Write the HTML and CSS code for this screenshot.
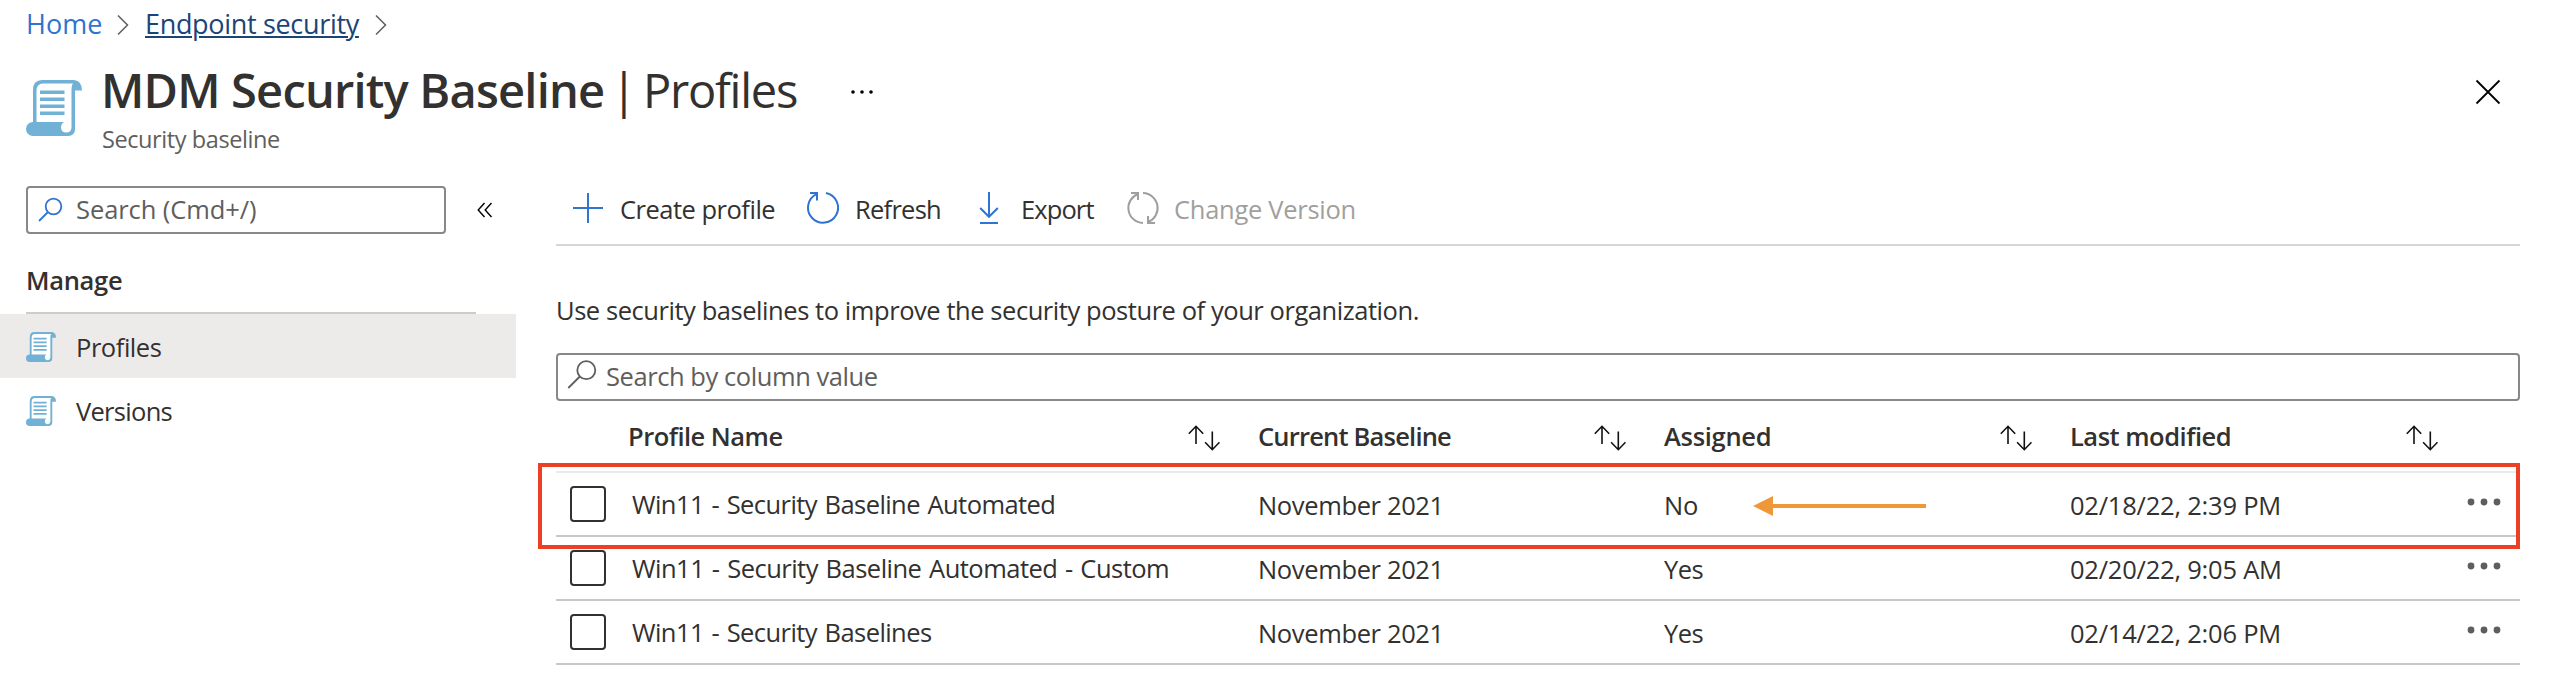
FILE: index.html
```
<!DOCTYPE html>
<html lang="en">
<head>
<meta charset="utf-8">
<title>MDM Security Baseline | Profiles</title>
<link rel="stylesheet" href="styles.css">
</head>
<body>
<svg class="defs" width="0" height="0">
  <symbol id="scroll" viewBox="0 0 56 56">
    <path fill="#71b1d5" d="M7 42V10Q7 0 16 0H48Q56 1 56 10.500H49V49Q49 56 42 56H7A7 7 0 0 1 7 42Z"/>
    <path fill="#fff" d="M10.500 42V11Q10.500 3.500 17 3.500H47Q45.500 5 45.500 10V48A5.300 5.300 0 0 1 35 48Q35 43.500 38 42Z"/>
    <path stroke="#71b1d5" stroke-width="3.500" d="M14 12.250H38.500M14 19.250H38.500M14 26.250H38.500M14 33.250H38.500"/>
  </symbol>
  <symbol id="sort" viewBox="0 0 32 26">
    <path fill="none" stroke="#111" stroke-width="1.600" d="M8 19V1.500M.800 8.800L8 1.300L15.200 8.800M24.300 6.500V24.500M17.100 17.200L24.300 24.700L31.500 17.200"/>
  </symbol>
  <symbol id="dots" viewBox="0 0 34 8">
    <g fill="#605e5c"><circle cx="4" cy="4" r="3.400"/><circle cx="17" cy="4" r="3.400"/><circle cx="30" cy="4" r="3.400"/></g>
  </symbol>
</svg>

<nav class="breadcrumb">
  <a class="home">Home</a>
  <svg width="12" height="22" viewBox="0 0 12 22"><path d="M1 1.500L10.500 11L1 20.500"/></svg>
  <a class="current">Endpoint security</a>
  <svg width="12" height="22" viewBox="0 0 12 22"><path d="M1 1.500L10.500 11L1 20.500"/></svg>
</nav>

<header class="header">
  <svg class="header-icon" width="56" height="56"><use href="#scroll"/></svg>
  <div class="heading">
    <h1 class="title"><span class="name">MDM Security Baseline</span><span class="pipe">|</span><span class="page">Profiles</span>
      <svg width="24" height="6" viewBox="0 0 24 6"><circle cx="3" cy="3" r="1.800"/><circle cx="12" cy="3" r="1.800"/><circle cx="21" cy="3" r="1.800"/></svg>
    </h1>
    <p class="subtitle">Security baseline</p>
  </div>
  <svg class="close" width="26" height="26" viewBox="0 0 26 26"><path d="M1.500 1.500L24.500 24.500M24.500 1.500L1.500 24.500"/></svg>
</header>

<div class="body">
  <aside class="sidebar">
    <div class="find">
      <div class="box menu-search">
        <svg width="26" height="26" viewBox="0 0 26 26"><circle cx="16.500" cy="9.500" r="7.800"/><path d="M11 15L2 24"/></svg>
        <span>Search (Cmd+/)</span>
      </div>
      <svg class="collapse" width="16" height="16" viewBox="0 0 16 16"><path d="M7.500 1L1.200 8L7.500 15M14.500 1L8.200 8L14.500 15"/></svg>
    </div>
    <h2 class="group">Manage</h2>
    <div class="item selected"><svg width="30" height="30"><use href="#scroll"/></svg><span class="profiles">Profiles</span></div>
    <div class="item"><svg width="30" height="30"><use href="#scroll"/></svg><span class="versions">Versions</span></div>
  </aside>

  <main class="main">
    <div class="toolbar">
      <svg class="i-plus" width="32" height="32" viewBox="0 0 32 32"><path d="M16 1V31M1 16H31"/></svg>
      <span class="create">Create profile</span>
      <svg class="i-refresh" width="34" height="34" viewBox="0 0 34 34"><path d="M21 2A15 15 0 1 1 11.500 3.200L11.800 3M5 2H12V9.500"/></svg>
      <span class="refresh">Refresh</span>
      <svg class="i-export" width="20" height="34" viewBox="0 0 20 34"><path d="M10 1V26M1.200 17L10 25.800L18.800 17M1 32H19"/></svg>
      <span class="export">Export</span>
      <svg class="i-change" width="34" height="34" viewBox="0 0 34 34"><path d="M17 2A15 15 0 0 1 22 31M29 32H22V25M17 32A15 15 0 0 1 12 3M5 2H12V9"/></svg>
      <span class="change">Change Version</span>
    </div>
    <p class="intro">Use security baselines to improve the security posture of your organization.</p>
    <div class="box column-search">
      <svg width="30" height="30" viewBox="0 0 30 30"><circle cx="19.300" cy="10.200" r="9"/><path d="M12.800 16.500L1.300 28"/></svg>
      <span>Search by column value</span>
    </div>

    <div class="grid">
      <div class="row head">
        <div class="cell first"><span class="h-name">Profile Name</span><svg width="32" height="26"><use href="#sort"/></svg></div>
        <div class="cell"><span class="h-base">Current Baseline</span><svg width="32" height="26"><use href="#sort"/></svg></div>
        <div class="cell"><span class="h-assigned">Assigned</span><svg width="32" height="26"><use href="#sort"/></svg></div>
        <div class="cell last"><span class="h-modified">Last modified</span><svg width="32" height="26"><use href="#sort"/></svg></div>
      </div>
      <div class="row">
        <div class="check"></div><div class="label">Win11 - Security Baseline Automated</div>
        <div class="value month">November 2021</div><div class="value">No</div><div class="value">02/18/22, 2:39 PM</div>
        <svg class="more" width="34" height="8"><use href="#dots"/></svg>
      </div>
      <div class="row">
        <div class="check"></div><div class="label long">Win11 - Security Baseline Automated - Custom</div>
        <div class="value month">November 2021</div><div class="value yes">Yes</div><div class="value">02/20/22, 9:05 AM</div>
        <svg class="more" width="34" height="8"><use href="#dots"/></svg>
      </div>
      <div class="row">
        <div class="check"></div><div class="label">Win11 - Security Baselines</div>
        <div class="value month">November 2021</div><div class="value yes">Yes</div><div class="value">02/14/22, 2:06 PM</div>
        <svg class="more" width="34" height="8"><use href="#dots"/></svg>
      </div>
      <div class="highlight"></div>
      <svg class="arrow" width="174" height="22" viewBox="0 0 174 22"><path fill="#ef9837" d="M0 11L20 1V9H173V13H20V21Z"/></svg>
    </div>
  </main>
</div>
</body>
</html>
```
FILE: styles.css
```
* { box-sizing: border-box; }
body {
  margin: 0;
  background: #fff;
  color: #323130;
  font: 25.5px/40px "Open Sans", "Noto Sans", sans-serif;
}
h1, h2, p { margin: 0; }
svg { display: block; flex: none; }
span, a { white-space: nowrap; }
.defs { position: absolute; }

.breadcrumb {
  display: flex;
  align-items: center;
  height: 47px;
  padding-left: 26px;
  font-size: 27px;
}
.breadcrumb svg { fill: none; stroke: #605e5c; stroke-width: 1.5; margin-top: 2px; }
.home { width: 91px; color: #2f74d0; }
.current {
  width: 214px;
  margin: 0 16px;
  color: #1b4477;
  letter-spacing: -.32px;
  text-decoration: underline;
  text-decoration-thickness: 2px;
  text-underline-offset: 2px;
}

.header { display: flex; height: 107px; padding: 13px 49px 0 26px; }
.header-icon { margin-top: 20px; }
.heading { flex: 1; padding-left: 19px; }
.title {
  display: flex;
  align-items: center;
  font-size: 47px;
  line-height: 60px;
  font-weight: 400;
}
.title svg { margin-top: 3px; }
.name { width: 510px; font-weight: 600; letter-spacing: -.8px; }
.pipe { width: 32px; }
.page { width: 207px; letter-spacing: -1.25px; }
.subtitle {
  margin-top: 4px;
  padding-left: 1px;
  color: #605e5c;
  font-size: 23.5px;
  line-height: 30px;
  letter-spacing: -.41px;
}
.close { margin-top: 19px; stroke: #000; stroke-width: 1.8; }

.body { display: flex; }
.sidebar { width: 516px; padding-top: 32px; }
.find { display: flex; align-items: center; padding-left: 26px; }
.box {
  display: flex;
  align-items: center;
  height: 48px;
  border: 2px solid #8a8886;
  border-radius: 4px;
  color: #605e5c;
}
.box svg { fill: none; stroke-width: 1.8; }
.box span { margin-top: -3px; }
.menu-search { width: 420px; padding-left: 9px; letter-spacing: -.08px; }
.menu-search svg { stroke: #2f74d0; }
.menu-search span { margin-left: 13px; }
.collapse { margin-left: 31px; fill: none; stroke: #000; stroke-width: 1.4; }
.group {
  width: 450px;
  margin: 14px 0 0 26px;
  border-bottom: 2px solid #ccc;
  font-size: 25.5px;
  font-weight: 600;
  line-height: 64px;
  letter-spacing: -.3px;
}
.item { display: flex; align-items: center; height: 64px; padding: 2px 0 0 26px; }
.item span { margin-left: 19px; }
.selected { background: #edebe9; }
.profiles { padding-left: 1px; letter-spacing: -.45px; }
.versions { padding-left: 1px; letter-spacing: -.7px; }

.main { width: 1964px; margin-left: 40px; }
.toolbar {
  display: flex;
  align-items: center;
  height: 92px;
  padding: 18px 0 0 16px;
  border-bottom: 2px solid #d6d6d6;
}
.toolbar svg { fill: none; stroke: #2f74d0; stroke-width: 2; }
.toolbar .i-change { stroke: #a19f9d; }
.toolbar span { margin-top: 1px; }
.create { width: 170px; margin-left: 16px; letter-spacing: -.5px; }
.i-refresh { margin-left: 15px; }
.refresh { width: 109px; margin-left: 16px; letter-spacing: -.75px; }
.i-export { margin-left: 15px; }
.export { width: 88px; margin-left: 22px; letter-spacing: -.9px; }
.i-change { margin-left: 17px; }
.change { margin-left: 14px; color: #a19f9d; letter-spacing: -.28px; }
.intro { margin-top: 44px; letter-spacing: -.44px; }
.column-search { margin-top: 23px; padding-left: 9px; letter-spacing: -.43px; }
.column-search svg { stroke: #605e5c; margin-top: -4px; }
.column-search span { margin-left: 9px; }

.grid { position: relative; }
.row {
  display: grid;
  grid-template-columns: 72px 629px 406px 406px 380px 1fr;
  align-items: center;
  height: 64px;
  border-bottom: 2px solid #c8c8c8;
}
.head { height: 72px; border-bottom-color: #eaeaea; font-weight: 600; }
.cell { display: flex; align-items: center; justify-content: space-between; padding-right: 37px; }
.cell svg { margin-top: 3px; }
.first { grid-column: 2; }
.last { grid-column: 5 / 7; padding-right: 82px; }
.h-name { letter-spacing: -.52px; }
.h-base { padding-left: 1px; letter-spacing: -.8px; }
.h-assigned { padding-left: 1px; letter-spacing: -.3px; }
.h-modified { padding-left: 1px; letter-spacing: -.5px; }
.check { width: 36px; height: 36px; margin-left: 14px; border: 2px solid #323130; border-radius: 4px; }
.label { padding-left: 4px; letter-spacing: -.57px; word-spacing: 1.5px; }
.long { letter-spacing: -.51px; }
.value { padding: 2px 0 0 1px; letter-spacing: -.22px; }
.month { letter-spacing: -.36px; }
.yes { letter-spacing: -.6px; }
.more { justify-self: end; margin: -4px 19px 0 0; }
.highlight {
  position: absolute;
  left: -18px;
  top: 62px;
  width: 1982px;
  height: 86px;
  border: 4px solid #eb4025;
}
.arrow { position: absolute; left: 1197px; top: 94px; }
```
